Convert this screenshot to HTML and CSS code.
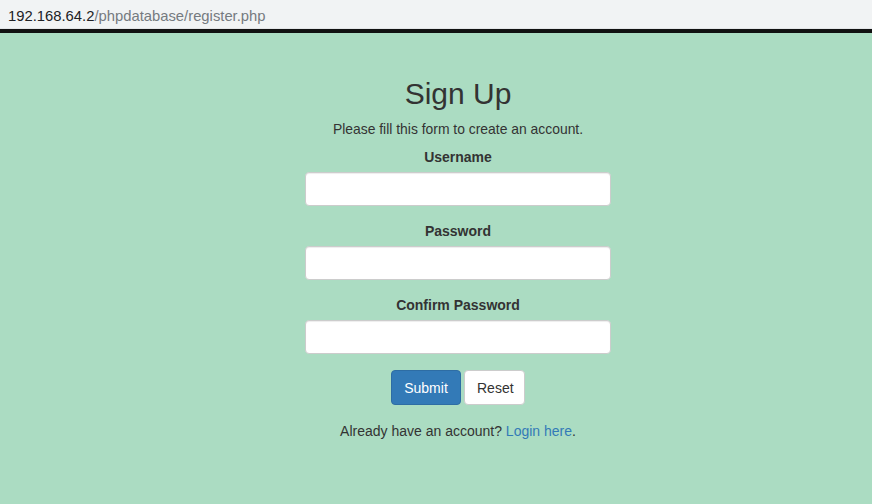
FILE: index.html
```html
<!DOCTYPE html>
<html>
<head>
<meta charset="utf-8">
<title>Sign Up</title>
<link rel="stylesheet" href="styles.css">
</head>
<body>
<div class="urlbar"><span class="host">192.168.64.2</span><span class="path">/phpdatabase/register.php</span></div>
<div class="divider"></div>
<main class="page">
  <div class="wrapper">
    <h2 class="title">Sign Up</h2>
    <p class="lead">Please fill this form to create an account.</p>
    <form class="form">
      <div class="form-group">
        <label class="label">Username</label>
        <input type="text" class="form-control">
      </div>
      <div class="form-group">
        <label class="label">Password</label>
        <input type="password" class="form-control">
      </div>
      <div class="form-group">
        <label class="label">Confirm Password</label>
        <input type="password" class="form-control">
      </div>
      <div class="form-group buttons">
        <button type="button" class="btn btn-primary">Submit</button>
        <button type="button" class="btn btn-default">Reset</button>
      </div>
      <p class="footer-text">Already have an account? <a class="link" href="#">Login here</a>.</p>
    </form>
  </div>
</main>
</body>
</html>
```
FILE: styles.css
```css
* { box-sizing: border-box; }
html, body { margin: 0; padding: 0; }
body {
  width: 872px;
  height: 504px;
  overflow: hidden;
  background: #abdcc2;
  font-family: "Liberation Sans", Arial, Helvetica, sans-serif;
  font-size: 14px;
  line-height: 20px;
  color: #333333;
}
.urlbar {
  height: 29px;
  background: #f1f3f4;
  padding: 6px 0 0 8px;
  font-size: 14.8px;
  line-height: 20px;
  border-bottom: 1px solid #e3e5e7;
}
.host { color: #202124; }
.path { color: #757a7f; }
.divider {
  height: 4px;
  background: #111111;
}
.page {
  padding-left: 44px;
}
.wrapper {
  width: 306px;
  margin: 0 auto;
  padding-top: 20px;
  text-align: center;
}
.title {
  margin: 24px 0 9px;
  font-size: 30px;
  font-weight: 400;
  line-height: 33px;
  color: #333333;
}
.lead {
  margin: 0 0 8px;
  font-size: 13.9px;
  line-height: 20px;
}
.form { margin: 0; }
.form-group {
  margin-bottom: 15px;
}
.label {
  display: block;
  font-weight: 700;
  margin-bottom: 5px;
}
.form-control {
  display: block;
  width: 306px;
  height: 34px;
  padding: 6px 12px;
  font-size: 14px;
  background: #ffffff;
  border: 1px solid #cccccc;
  border-radius: 4px;
  box-shadow: inset 0 1px 1px rgba(0,0,0,0.075);
}
.buttons {
  display: flex;
  justify-content: center;
  gap: 3px;
  padding-top: 1px;
}
.btn {
  height: 35px;
  padding: 6px 12px;
  font-family: inherit;
  font-size: 14px;
  line-height: 20px;
  border: 1px solid transparent;
  border-radius: 4px;
}
.btn-primary {
  width: 70px;
  background: #337ab7;
  border-color: #2e6da4;
  color: #ffffff;
}
.btn-default {
  width: 61px;
  background: #ffffff;
  border-color: #cccccc;
  color: #333333;
}
.footer-text {
  margin: 16px 0 0;
}
.link {
  color: #337ab7;
  text-decoration: none;
}
```
